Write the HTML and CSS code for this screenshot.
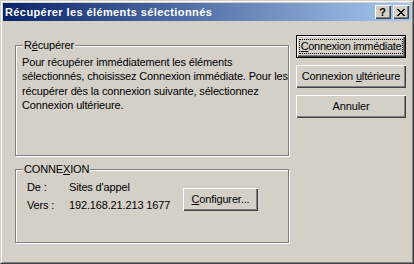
FILE: index.html
```html
<!DOCTYPE html>
<html lang="fr">
<head>
<meta charset="utf-8">
<title>Récupérer les éléments sélectionnés</title>
<link rel="stylesheet" href="styles.css">
</head>
<body>
<div class="window">
  <div class="frame">
    <div class="titlebar">
      <span class="title">Récupérer les éléments sélectionnés</span>
      <div class="caption-btns">
        <div class="cap cap-help">?</div>
        <div class="cap cap-close">
          <svg width="8" height="7" viewBox="0 0 8 7"><path d="M0 0h2v1h1v1h2v-1h1v-1h2v1h-1v1h-1v1h-1v1h1v1h1v1h1v1h-2v-1h-1v-1h-2v1h-1v1h-2v-1h1v-1h1v-1h1v-1h-1v-1h-1v-1h-1z" fill="#000"/></svg>
        </div>
      </div>
    </div>
    <div class="content">
      <div class="left">
        <div class="group g1">
          <div class="glabel">R<u>é</u>cupérer</div>
          <p class="desc">Pour récupérer immédiatement les éléments<br>sélectionnés, choisissez Connexion immédiate. Pour les<br>récupérer dès la connexion suivante, sélectionnez<br>Connexion ultérieure.</p>
        </div>
        <div class="group g2">
          <div class="glabel">CONNE<u>X</u>ION</div>
          <div class="conn">
            <div class="info">
              <span>De :</span><span>Sites d'appel</span>
              <span>Vers :</span><span>192.168.21.213 1677</span>
            </div>
            <div class="btn cfg"><u>C</u>onfigurer...</div>
          </div>
        </div>
      </div>
      <div class="right">
        <div class="btn default"><div class="focus"><u>C</u>onnexion immédiate</div></div>
        <div class="btn">Connexion <u>u</u>ltérieure</div>
        <div class="btn">Annuler</div>
      </div>
    </div>
  </div>
</div>
</body>
</html>
```
FILE: styles.css
```css
* { box-sizing: border-box; }
html, body { margin: 0; padding: 0; }
body {
  width: 414px;
  height: 264px;
  background: #d4d0c8;
  font-family: "Liberation Sans", Arial, sans-serif;
  font-size: 11px;
  letter-spacing: -0.15px;
  color: #000;
}
.window {
  width: 414px;
  height: 264px;
  border: 1px solid;
  border-color: #d4d0c8 #404040 #404040 #d4d0c8;
  background: #d4d0c8;
}
.frame {
  height: 100%;
  border: 1px solid;
  border-color: #fff #808080 #808080 #fff;
  padding: 1px;
}
.titlebar {
  height: 18px;
  background: linear-gradient(to right, #0a246a, #a6caf0);
  display: flex;
  align-items: center;
  justify-content: space-between;
  padding: 0 2px 0 2px;
}
.title {
  color: #fff;
  font-weight: bold;
  font-size: 11px;
  line-height: 13px;
  letter-spacing: 0.4px;
}
.caption-btns {
  display: flex;
  gap: 2px;
}
.cap {
  width: 16px;
  height: 14px;
  background: #d4d0c8;
  box-shadow: inset 1px 1px 0 #fff, inset -1px -1px 0 #404040, inset -2px -2px 0 #808080;
  display: flex;
  align-items: center;
  justify-content: center;
}
.cap-help {
  font-weight: bold;
  font-size: 11px;
  line-height: 11px;
  padding-right: 1px;
  letter-spacing: 0;
}
.cap-close svg { display: block; margin-right: 1px; }
.content {
  display: flex;
  gap: 7px;
  padding: 0 4px 0 12px;
}
.left {
  width: 274px;
  padding-top: 24px;
}
.group {
  border: 1px solid #808080;
  box-shadow: 1px 1px 0 #fff, inset 1px 1px 0 #fff;
}
.g1 { height: 111px; }
.g2 { height: 74px; margin-top: 13px; }
.glabel {
  width: fit-content;
  margin: -7px 0 0 7px;
  padding: 0 1px;
  background: #d4d0c8;
  line-height: 13px;
}
.desc {
  margin: 3px 0 0 6px;
  line-height: 14.4px;
  white-space: nowrap;
}
.conn {
  display: flex;
  align-items: flex-start;
  padding: 2px 0 0 11px;
}
.info {
  display: grid;
  grid-template-columns: 42px 114px;
  line-height: 18px;
  white-space: nowrap;
}
.btn {
  height: 23px;
  background: #d4d0c8;
  box-shadow: inset 1px 1px 0 #fff, inset -1px -1px 0 #404040, inset -2px -2px 0 #808080;
  text-align: center;
  line-height: 22px;
  white-space: nowrap;
}
.cfg {
  width: 75px;
  margin-top: 10px;
}
.right {
  width: 110px;
  padding-top: 14px;
  display: flex;
  flex-direction: column;
  gap: 7px;
}
.default {
  border: 1px solid #000;
  padding: 3px 2px;
  line-height: 15px;
}
.focus {
  height: 15px;
  border: 1px dotted #000;
  line-height: 13px;
  letter-spacing: -0.3px;
}
u { text-underline-offset: 1px; }
```
